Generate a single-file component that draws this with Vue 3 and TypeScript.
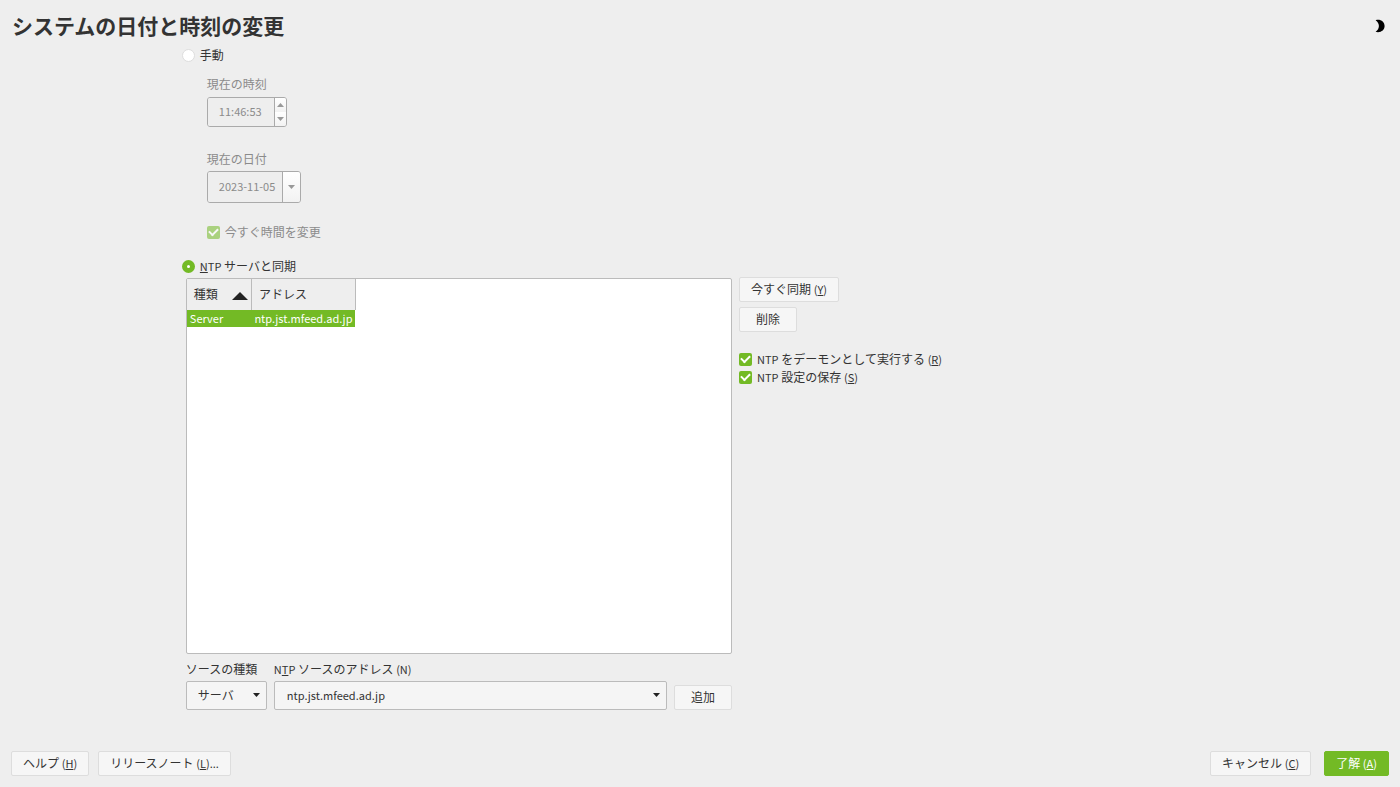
<script setup lang="ts">
import { ref } from 'vue'

interface Server { kind: string; address: string }

const mode = ref<'manual' | 'ntp'>('ntp')
const time = ref('11:46:53')
const date = ref('2023-11-05')
const changeNow = ref(true)
const runDaemon = ref(true)
const saveConfig = ref(true)
const sourceType = ref('サーバ')
const sourceAddress = ref('ntp.jst.mfeed.ad.jp')
const servers = ref<Server[]>([{ kind: 'Server', address: 'ntp.jst.mfeed.ad.jp' }])

function addServer() {
  servers.value.push({ kind: 'Server', address: sourceAddress.value })
}
function removeServer() {
  servers.value.pop()
}
</script>

<template>
  <div class="page">
    <header class="header">
      <h1>システムの日付と時刻の変更</h1>
      <button class="theme" type="button" aria-label="テーマ">
        <svg width="10" height="14" viewBox="0 0 10 14"><path d="M0.6 1.2C5.5-.2 9.6 2.8 9.6 7s-4.1 7.2-9 5.8C5 9.8 5 4.2.6 1.2z" fill="#000" /></svg>
      </button>
    </header>

    <main class="main">
      <label class="choice"><input v-model="mode" type="radio" name="mode" value="manual"><span>手動</span></label>

      <div class="manual">
        <label for="time">現在の時刻</label>
        <div class="field time">
          <input id="time" v-model="time" type="text" disabled>
          <div class="steps">
            <button type="button" disabled aria-label="増やす"><svg width="7" height="4" viewBox="0 0 7 4"><path d="M0 4L3.5 0 7 4z" /></svg></button>
            <button type="button" disabled aria-label="減らす"><svg width="7" height="4" viewBox="0 0 7 4"><path d="M0 0h7L3.5 4z" /></svg></button>
          </div>
        </div>
        <label for="date">現在の日付</label>
        <div class="field date">
          <input id="date" v-model="date" type="text" disabled>
          <button class="open" type="button" disabled aria-label="カレンダー"><svg width="7" height="4" viewBox="0 0 7 4"><path d="M0 0h7L3.5 4z" /></svg></button>
        </div>
        <label class="choice"><input v-model="changeNow" type="checkbox" disabled><span>今すぐ時間を変更</span></label>
      </div>

      <label class="choice"><input v-model="mode" type="radio" name="mode" value="ntp"><span><b><u>N</u>TP</b> サーバと同期</span></label>

      <div class="sync">
        <div class="left">
          <div class="list">
            <table>
              <thead>
                <tr>
                  <th scope="col"><span class="sort">種類<svg width="16" height="8" viewBox="0 0 16 8"><path d="M0 8L8 0l8 8z" fill="#222" /></svg></span></th>
                  <th scope="col">アドレス</th>
                </tr>
              </thead>
              <tbody>
                <tr v-for="(s, i) in servers" :key="i"><td>{{ s.kind }}</td><td>{{ s.address }}</td></tr>
              </tbody>
            </table>
          </div>
          <div class="source">
            <div class="type">
              <label for="type">ソースの種類</label>
              <div class="combo">
                <select id="type" v-model="sourceType"><option>サーバ</option></select>
                <svg width="7" height="4" viewBox="0 0 7 4"><path d="M0 0h7L3.5 4z" /></svg>
              </div>
            </div>
            <div class="address">
              <label for="address"><b>N<u>T</u>P</b> ソースのアドレス <b>(N)</b></label>
              <div class="combo latin">
                <select id="address" v-model="sourceAddress"><option>ntp.jst.mfeed.ad.jp</option></select>
                <svg width="7" height="4" viewBox="0 0 7 4"><path d="M0 0h7L3.5 4z" /></svg>
              </div>
            </div>
            <button class="btn add" type="button" @click="addServer">追加</button>
          </div>
        </div>
        <div class="right">
          <button class="btn" type="button">今すぐ同期 <b>(<u>Y</u>)</b></button>
          <button class="btn remove" type="button" @click="removeServer">削除</button>
          <div class="options">
            <label class="choice"><input v-model="runDaemon" type="checkbox"><span><b>NTP</b> をデーモンとして実行する <b>(<u>R</u>)</b></span></label>
            <label class="choice"><input v-model="saveConfig" type="checkbox"><span><b>NTP</b> 設定の保存 <b>(<u>S</u>)</b></span></label>
          </div>
        </div>
      </div>
    </main>

    <footer class="footer">
      <button class="btn" type="button">ヘルプ <b>(<u>H</u>)</b></button>
      <button class="btn" type="button">リリースノート <b>(<u>L</u>)...</b></button>
      <button class="btn cancel" type="button">キャンセル <b>(<u>C</u>)</b></button>
      <button class="btn primary" type="button">了解 <b>(<u>A</u>)</b></button>
    </footer>
  </div>
</template>

<style>
body { margin: 0; background: #eee; }
</style>

<style scoped>
* { box-sizing: border-box; }
.page {
  display: flex;
  flex-direction: column;
  min-height: 100vh;
  padding: 0 11px 11px;
  background: #eee;
  color: #333;
  font: 12px/18px "Noto Sans CJK JP", sans-serif;
}
button, input, select { margin: 0; font: inherit; color: inherit; }
b { font-size: 11px; line-height: 12px; font-weight: 400; }
u { text-underline-offset: 1px; }
label { display: block; white-space: nowrap; }

.header { display: flex; align-items: center; justify-content: space-between; height: 46px; padding: 5px 0 0 1px; }
h1 { margin: 0; font-size: 21px; line-height: 28px; padding-bottom: 2px; font-weight: 700; }
.theme { display: flex; padding: 0 4px; border: 0; background: none; }

.main { flex: 1; display: flex; flex-direction: column; padding-left: 12.4%; }
.choice { display: flex; align-items: center; gap: 5px; }
.choice input { appearance: none; flex: none; display: grid; place-items: center; width: 13px; height: 13px; }
.choice input[type="radio"] { border: 1px solid #ddd; border-radius: 50%; background: #fff; }
.choice input[type="radio"]:checked { border: 5px solid #73ba25; }
.choice input[type="checkbox"] { border-radius: 2px; background: #73ba25; }
.choice input[type="checkbox"]:checked::after {
  content: "";
  width: 7px;
  height: 4px;
  margin-bottom: 2px;
  border: solid #fff;
  border-width: 0 0 2px 2px;
  transform: rotate(-45deg);
}
.choice input:disabled { opacity: 0.55; }

.manual { display: flex; flex-direction: column; align-items: flex-start; padding: 11px 0 16px 25px; color: #8b8b8b; }
.field { display: flex; overflow: hidden; border: 1px solid #aaa; border-radius: 3px; }
.field input { min-width: 0; flex: 1; padding: 0 0 2px 11px; border: 0; background: #eee; font-size: 11px; }
.field button { display: grid; place-items: center; padding: 0; border: 0; background: linear-gradient(#fff, #f2f2f2); }
.field svg { fill: #999; }
.time { width: 80px; height: 30px; margin: 4px 0 23px; }
.date { width: 94px; height: 32px; margin: 3px 0 20px; }
.steps { display: grid; grid-template-rows: 1fr 1fr; width: 12px; border-left: 1px solid #aaa; }
.date .open { width: 18px; border-left: 1px solid #aaa; }

.sync { flex: 1; display: flex; gap: 7px; padding: 3px 0 41px 4px; }
.left { display: flex; flex-direction: column; flex: 0 1 45.4%; }
.list { flex: 1; border: 1px solid #bbb; border-radius: 2px; background: #fff; }
table { border-collapse: collapse; white-space: nowrap; }
th { height: 31px; padding: 0 7px 2px; border-right: 1px solid #bbb; background: #eee; text-align: left; font-weight: 400; }
th:first-child { padding-right: 3px; }
.sort { display: flex; align-items: center; gap: 14px; }
.sort svg { margin-top: 4px; }
td { height: 17px; padding: 0 3px; background: #73ba25; color: #fff; font-size: 11px; line-height: 17px; }

.source { display: flex; gap: 7px; padding-top: 6px; }
.type { width: 81px; }
.address { flex: 1; }
.combo { position: relative; margin-top: 3px; }
.combo select { appearance: none; display: block; width: 100%; height: 29px; padding: 0 20px 2px 11px; border: 1px solid #bbb; border-radius: 2px; background: #f5f5f5; }
.combo svg { position: absolute; right: 7px; top: 12px; fill: #222; pointer-events: none; }
.latin select { padding-left: 12px; font-size: 11px; }

.btn { height: 25px; padding: 0 11px 2px; border: 1px solid #ddd; border-radius: 2px; background: #f6f6f6; line-height: 18px; white-space: nowrap; }
.add, .remove { width: 58px; }
.add { align-self: flex-end; }
.right { display: flex; flex-direction: column; align-items: flex-start; gap: 5px; }
.right .btn:first-child { margin-top: -1px; }
.options { margin-top: 13px; }

.footer { display: flex; gap: 9px; }
.cancel { margin-left: auto; }
.primary { margin-left: 4px; border-color: #73ba25; background: #73ba25; color: #fff; }
</style>
